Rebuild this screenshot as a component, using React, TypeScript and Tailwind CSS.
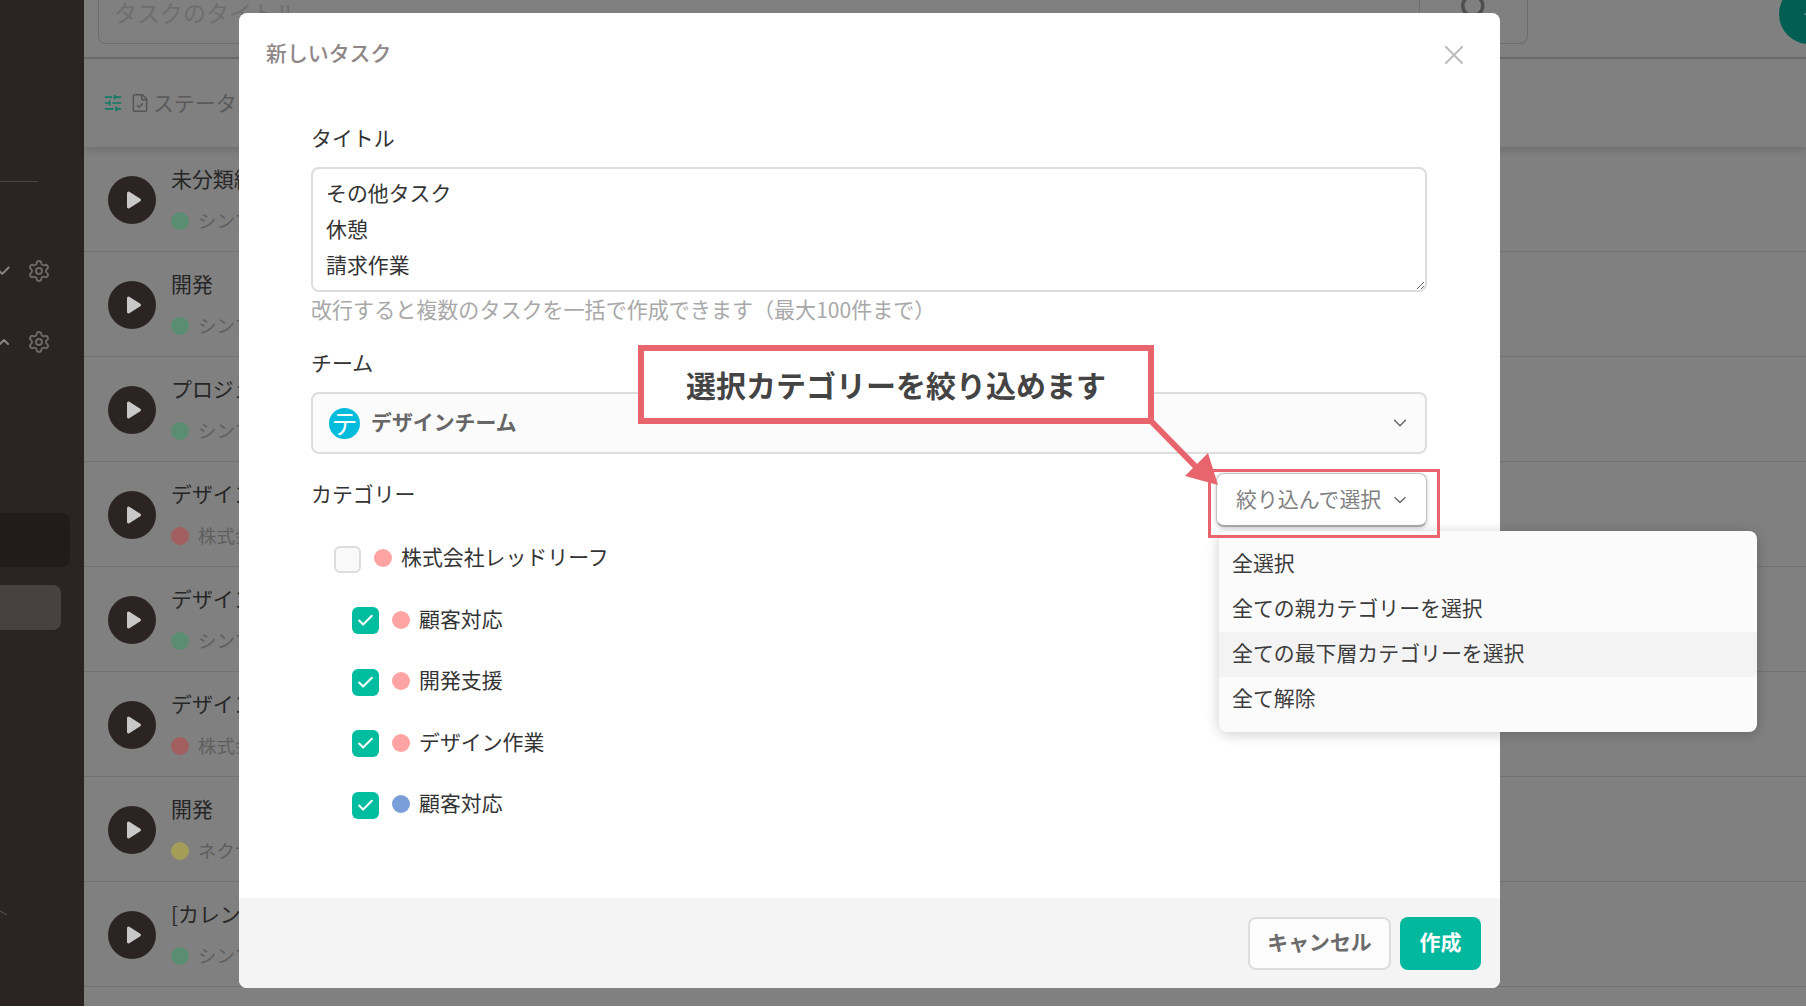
import React from "react";
import { Check, ChevronDown, ChevronUp, FileCheck, Plus, Search, Settings, SlidersHorizontal, X } from "lucide-react";

const rows = [
  { title: "未分類組", sub: "シンプル", dot: "bg-[#5b8d73]" },
  { title: "開発", sub: "シンプル", dot: "bg-[#5b8d73]" },
  { title: "プロジェクト", sub: "シンプル", dot: "bg-[#5b8d73]" },
  { title: "デザイン業務", sub: "株式会社", dot: "bg-[#a35f5f]" },
  { title: "デザイン業務", sub: "シンプル", dot: "bg-[#5b8d73]" },
  { title: "デザイン業務", sub: "株式会社", dot: "bg-[#a35f5f]" },
  { title: "開発", sub: "ネクサス", dot: "bg-[#a39d58]" },
  { title: "[カレンダー", sub: "シンプル", dot: "bg-[#5b8d73]" },
];

const cats = [
  { name: "顧客対応", dot: "bg-[#ffa3a3]" },
  { name: "開発支援", dot: "bg-[#ffa3a3]" },
  { name: "デザイン作業", dot: "bg-[#ffa3a3]" },
  { name: "顧客対応", dot: "bg-[#7a9fd8]" },
];

function Sidebar() {
  return (
    <aside className="w-[84px] shrink-0 bg-[#2b2423] flex flex-col overflow-hidden">
      <div className="mt-[181px] h-px w-[38px] bg-[#4a4544]" />
      <div className="mt-[74px] h-[30px] flex items-center">
        <Check size={14} strokeWidth={3.4} className="text-[#8a8686] -ml-[3px]" />
        <Settings size={24} strokeWidth={1.9} className="text-[#6d6968] ml-[16px]" />
      </div>
      <div className="mt-[41px] h-[30px] flex items-center">
        <ChevronUp size={16} strokeWidth={3} className="text-[#8a8686] -ml-[4px]" />
        <Settings size={24} strokeWidth={1.9} className="text-[#6d6968] ml-[15px]" />
      </div>
      <div className="mt-[156px] h-[54px] w-[70px] rounded-r-lg bg-[#211c1b]" />
      <div className="mt-[18px] h-[45px] w-[61px] rounded-r-lg bg-[#474241]" />
      <svg className="mt-[280px]" width="10" height="8" viewBox="0 0 10 8">
        <path d="M0 1 L7 5" stroke="#5a5655" strokeWidth="1" fill="none" />
      </svg>
    </aside>
  );
}

function Background() {
  return (
    <main className="flex-1 min-w-0 bg-[#808080] flex flex-col">
      <header className="h-[59px] shrink-0 border-b-2 border-[#6d6d6d] flex items-start">
        <div className="ml-[14px] w-[1430px] h-[44px] border-x border-b border-[#6d6d6d] rounded-b-lg flex">
          <div className="flex-1 pl-[15px] text-[23px] leading-[24px] text-[#6e6e6e] overflow-hidden">タスクのタイトル</div>
          <div className="w-[108px] border-l border-[#6d6d6d] flex justify-center items-start">
            <Search size={30} strokeWidth={2.8} className="text-[#4f4f4f] -mt-[8px]" />
          </div>
        </div>
        <div className="ml-auto -mr-[33px] -mt-[16px] w-[60px] h-[60px] rounded-full bg-[#005f52] flex items-center justify-center">
          <Plus size={14} className="text-[#bbbbbb]" />
        </div>
      </header>
      <div className="h-[88px] shrink-0 flex items-center pl-[19px] relative shadow-[0_3px_8px_rgba(0,0,0,0.16)]">
        <SlidersHorizontal size={20} className="text-[#0f7a66]" />
        <FileCheck size={20} strokeWidth={1.8} className="text-[#555555] ml-[7px]" />
        <span className="ml-[3px] text-[20.9px] text-[#5a5a5a]">ステータス</span>
      </div>
      <div className="flex flex-col">
        {rows.map((r, i) => (
          <div key={i} className="h-[105px] shrink-0 border-b border-[#727272] flex items-center pl-[24px] pt-[2px]">
            <div className="w-[48px] h-[48px] rounded-full bg-[#2b2423] flex items-center justify-center shrink-0">
              <svg width="16" height="20" viewBox="0 0 16 20" className="ml-[3px]">
                <path d="M2.5 3 L13.5 10 L2.5 17 Z" fill="#c8c8c8" stroke="#c8c8c8" strokeWidth="3" strokeLinejoin="round" />
              </svg>
            </div>
            <div className="ml-[15px] flex flex-col gap-[17px] -mt-[6px]">
              <div className="text-[20.9px] leading-[30px] text-[#262626] whitespace-nowrap">{r.title}</div>
              <div className="flex items-center h-[22px]">
                <span className={`w-[18px] h-[18px] rounded-full ${r.dot}`} />
                <span className="ml-[9px] text-[18.4px] text-[#5f5f5f] whitespace-nowrap">{r.sub}</span>
              </div>
            </div>
          </div>
        ))}
      </div>
    </main>
  );
}

function Modal() {
  return (
    <div className="absolute left-[239px] top-[13px] w-[1261px] h-[975px] bg-white rounded-lg flex flex-col">
      <div className="h-[80px] shrink-0 flex items-center justify-between pl-[27px] pr-[30px]">
        <h2 className="text-[20.9px] font-medium text-[#8f8787]">新しいタスク</h2>
        <X size={32} strokeWidth={1.6} className="text-[#bdbdbd] mt-[4px]" />
      </div>
      <div className="flex-1 pl-[72px] pr-[73px] pt-[29px] flex flex-col">
        <label className="h-[30px] leading-[30px] text-[20.9px] text-[#333333]">タイトル</label>
        <textarea
          readOnly
          defaultValue={"その他タスク\n休憩\n請求作業"}
          className="mt-[15px] h-[125px] w-full resize-y rounded-lg border-2 border-[#dddddd] bg-white pl-[13px] pt-[5px] text-[20.9px] leading-[36px] text-[#333333] outline-none"
        />
        <p className="mt-[2px] h-[30px] leading-[30px] text-[21.05px] text-[#a8a8a8] whitespace-nowrap">
          改行すると複数のタスクを一括で作成できます（最大100件まで）
        </p>
        <label className="mt-[23px] h-[30px] leading-[30px] text-[20.9px] text-[#333333]">チーム</label>
        <div className="mt-[15px] h-[62px] rounded-lg border-2 border-[#dddddd] bg-[#fbfbfb] flex items-center pl-[16px] pr-[14px]">
          <span className="w-[31px] h-[31px] rounded-full bg-[#00bcdc] overflow-hidden flex items-center justify-center text-white text-[26px] leading-none shrink-0">テ</span>
          <span className="ml-[11px] pb-[2px] text-[20.9px] font-bold text-[#666666]">デザインチーム</span>
          <ChevronDown size={22} strokeWidth={1.6} className="ml-auto text-[#666666]" />
        </div>
        <div className="mt-[19px] flex items-start justify-between">
          <label className="mt-[5px] h-[30px] leading-[30px] text-[20.9px] text-[#333333]">カテゴリー</label>
          <div className="relative">
            <button className="w-[211px] h-[54px] rounded-lg border border-[#c4c4c4] border-b-2 border-b-[#aaaaaa] bg-white shadow-[0_1px_4px_rgba(0,0,0,0.2)] flex items-center pl-[19px] pb-[2px] text-[20.9px] text-[#808080] whitespace-nowrap">
              絞り込んで選択
              <ChevronDown size={20} strokeWidth={1.6} className="ml-[9px] mt-[2px] text-[#666666]" />
            </button>
            <div className="absolute left-[3px] top-[58px] w-[538px] h-[201px] rounded-lg bg-[#fbfbfb] shadow-[0_2px_14px_rgba(0,0,0,0.2)] py-[11px] flex flex-col text-[20.9px] text-[#3c3c3c]">
              {["全選択", "全ての親カテゴリーを選択", "全ての最下層カテゴリーを選択", "全て解除"].map((t, i) => (
                <div key={t} className={`h-[45px] shrink-0 flex items-center pl-[13px] pb-[4px] ${i === 2 ? "bg-[#f3f3f3]" : ""}`}>{t}</div>
              ))}
            </div>
            <div className="absolute -left-[8px] -right-[13px] -top-[4px] -bottom-[11px] border-[3px] border-[#e8656d]" />
          </div>
        </div>
        <div className="mt-[17px] flex flex-col gap-[33.5px]">
          <div className="h-[28px] ml-[23px] flex items-center">
            <span className="w-[27px] h-[27px] rounded-md border-2 border-[#dddddd] bg-[#f9f9f9] shrink-0 mt-[2px]" />
            <span className="ml-[13px] w-[18px] h-[18px] rounded-full bg-[#ffa3a3]" />
            <span className="ml-[9px] text-[20.9px] text-[#333333] -mt-[2px]">株式会社レッドリーフ</span>
          </div>
          {cats.map((c, i) => (
            <div key={i} className="h-[28px] ml-[41px] flex items-center">
              <span className="w-[27px] h-[27px] rounded-md bg-[#00bda0] flex items-center justify-center shrink-0 mt-[2px]">
                <Check size={19} strokeWidth={2.5} className="text-white" />
              </span>
              <span className={`ml-[13px] w-[18px] h-[18px] rounded-full ${c.dot}`} />
              <span className="ml-[9px] text-[20.9px] text-[#333333] -mt-[2px]">{c.name}</span>
            </div>
          ))}
        </div>
      </div>
      <div className="h-[90px] shrink-0 bg-[#f4f4f4] rounded-b-lg flex items-center justify-end pr-[19px] gap-[9px]">
        <button className="w-[143px] h-[53px] rounded-lg border-2 border-[#dddddd] bg-[#fcfcfc] pb-[2px] text-[20.9px] font-bold text-[#6b6b6b]">キャンセル</button>
        <button className="w-[81px] h-[53px] rounded-lg bg-[#00b89e] pb-[2px] text-[20.9px] font-bold text-white">作成</button>
      </div>
    </div>
  );
}

function Callout() {
  return (
    <>
      <div className="absolute left-[638px] top-[345px] w-[516px] h-[79px] border-[6px] border-[#e8656d] bg-white flex items-center justify-center text-[30px] font-bold text-[#444444] whitespace-nowrap">
        選択カテゴリーを絞り込めます
      </div>
      <svg className="absolute left-[1140px] top-[415px]" width="90" height="80" viewBox="0 0 90 80">
        <path d="M10 5 L56 52" stroke="#e8656d" strokeWidth="6" fill="none" />
        <path d="M78 70 L68 38 L45 61 Z" fill="#e8656d" />
      </svg>
    </>
  );
}

export default function App() {
  return (
    <div className="relative h-[1006px] w-[1806px] overflow-hidden flex font-['Noto_Sans_CJK_JP','Noto_Sans',sans-serif]">
      <Sidebar />
      <Background />
      <Modal />
      <Callout />
    </div>
  );
}
